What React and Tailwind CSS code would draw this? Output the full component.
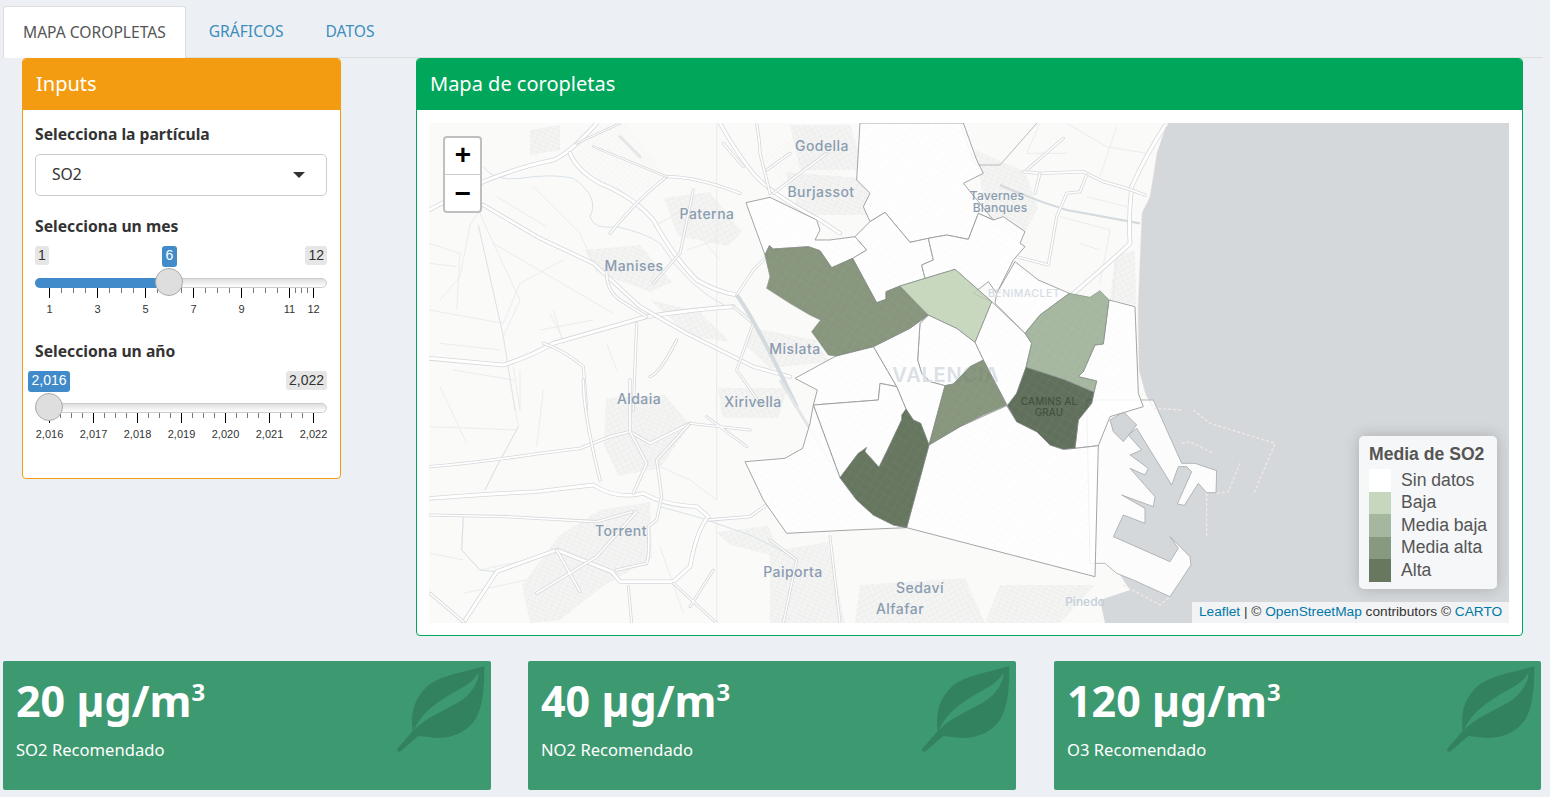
import React from "react";

const Road = ({ d, w = 2.6 }) => (
  <g fill="none" strokeLinecap="round" strokeLinejoin="round">
    <path d={d} stroke="#d6d8da" strokeWidth={w + 1.6} vectorEffect="non-scaling-stroke" />
    <path d={d} stroke="#ffffff" strokeWidth={w} vectorEffect="non-scaling-stroke" />
  </g>
);
const Thin = ({ d, c = "#e7e8e8", w = 0.8 }) => (
  <path d={d} fill="none" stroke={c} strokeWidth={w} vectorEffect="non-scaling-stroke" />
);
const Z = ({ x, y, children }) => <g transform={`translate(${x} ${y}) scale(0.33333)`}>{children}</g>;

const whites = [
  "390,-171 380,0 420,40 400,80 420,125 465,97 540,187 595,175 650,165 715,178 745,100 790,120 700,10 760,-20 740,-60 700,-171",
  "48,68 120,52 260,120 270,150 255,180 300,180 375,170 410,210 368,235 305,263 270,212 235,200 130,207 118,197 105,225",
  "375,170 420,125 465,97 540,187 595,175 610,240 575,255 585,295 510,318 468,335 468,358 440,368 368,235 410,210",
  "595,175 650,165 715,178 745,100 790,120 820,110 885,155 870,190 885,200 850,240 800,340 775,305 730,340 785,365 675,268 585,295 575,255 610,240",
  "855,245 925,300 1018,340 930,405 885,460 795,370 800,340",
  "785,365 885,460 905,490 888,562 860,640 832,677 760,540 735,487",
  "1137,360 1215,380 1225,640 1240,680 1140,710 1105,797 1035,805 1045,720 1085,670 1092,637 1100,603 1045,590 1060,575 1095,495 1120,492",
  "595,405 680,445 735,487 760,540 720,560 670,612 645,617 600,605 575,580 563,540 570,430",
  "430,500 540,445 595,405 570,430 563,540 575,580 600,605 645,617 597,795 572,730 550,720 528,687 500,620",
  "195,595 318,528 430,500 500,620 450,610 445,660 250,675 262,630",
  "250,675 445,660 450,610 500,620 528,687 515,720 470,815 447,862 405,815 385,820 330,893",
  "45,845 165,835 218,805 240,730 250,675 330,893 380,960 430,1005 490,1035 530,1043 365,1050 170,1060 100,960",
  "597,795 690,740 830,677 860,725 920,755 960,795 1000,808 1035,805 1105,797 1095,1190 530,1043",
];
const greens = [
  ["105,225 118,197 130,207 235,200 270,212 305,263 368,235 440,368 468,358 468,335 510,318 560,370 595,405 540,445 430,500 318,528 295,525 270,490 245,455 272,420 240,405 180,370 110,325 120,290", "#6a7d5e"],
  ["510,318 675,268 785,365 735,487 680,445 595,405 560,370", "#bacfaf"],
  ["1018,340 1080,352 1110,332 1137,360 1120,492 1095,495 1060,575 1045,590 1100,603 1092,637 1005,600 888,562 905,490 885,460 930,405", "#91a689"],
  ["888,562 1005,600 1092,637 1085,670 1045,720 1035,805 1000,808 960,795 920,755 860,725 832,677 860,640", "#3b4d34"],
  ["760,540 830,675 760,705 690,740 597,795 645,617 670,612 720,560", "#6a7d5e"],
  ["528,687 550,720 572,730 597,795 530,1043 490,1035 430,1005 380,960 330,893 385,820 410,802 405,815 447,862 470,815 515,720 515,705", "#415538"],
];

const labels = [
  ["Godella", 822, 151], ["Burjassot", 821, 197], ["Paterna", 707, 219], ["Manises", 634, 271],
  ["Mislata", 795, 354], ["Aldaia", 639, 404], ["Xirivella", 753, 407], ["Torrent", 621, 536],
  ["Paiporta", 793, 577], ["Sedaví", 920, 593], ["Alfafar", 900, 614],
];

function MapArt() {
  return (
    <svg viewBox="429 123 1080 500" className="block w-full h-full">
      <defs>
        <pattern id="u1" width="5" height="5" patternUnits="userSpaceOnUse" patternTransform="rotate(-28)">
          <rect width="5" height="5" fill="#f4f4f3" /><path d="M0 0H5M0 0V5" stroke="#e3e4e4" strokeWidth="0.7" />
        </pattern>
        <pattern id="u2" width="6" height="4" patternUnits="userSpaceOnUse" patternTransform="rotate(24)">
          <rect width="6" height="4" fill="#f4f4f3" /><path d="M0 0H6M0 0V4" stroke="#e3e4e4" strokeWidth="0.7" />
        </pattern>
        <pattern id="g" width="14" height="12" patternUnits="userSpaceOnUse" patternTransform="rotate(40)">
          <path d="M0 0H14M0 0V12" stroke="#e3e4e5" strokeWidth="0.9" />
        </pattern>
        <pattern id="s" width="24" height="24" patternUnits="userSpaceOnUse" patternTransform="rotate(32)">
          <path d="M0 0H24M0 0V24" stroke="#ffffff" strokeOpacity="0.13" strokeWidth="1.4" />
        </pattern>
        <pattern id="w" width="22" height="18" patternUnits="userSpaceOnUse" patternTransform="rotate(32)">
          <path d="M0 0H22M0 0V18" stroke="#f0f1f1" strokeWidth="1.2" />
        </pattern>
      </defs>
      <rect x="429" y="123" width="1080" height="500" fill="#d4d8db" />
      <polygon points="429,123 1167,123 1157,153 1150,197 1142,213 1138,310 1139,370 1146,395 1153,407 1145,425 1115,425 1110,445 1125,470 1115,505 1110,560 1130,590 1100,600 1105,623 429,623" fill="#fafaf9" />
      <g>
        <polygon points="790,125 850,125 865,170 800,170" fill="url(#u1)" />
        <polygon points="785,172 860,178 880,215 800,215" fill="url(#u2)" />
        <polygon points="664,198 710,192 742,232 728,246 678,236" fill="url(#u1)" />
        <polygon points="585,250 640,245 672,282 650,292 596,272" fill="url(#u2)" />
        <polygon points="650,300 700,312 730,342 690,336" fill="url(#u1)" />
        <polygon points="755,328 815,340 830,362 770,368 745,345" fill="url(#u2)" />
        <polygon points="606,398 665,395 690,425 660,468 618,476 604,445" fill="url(#u1)" />
        <polygon points="640,405 680,420 650,470" fill="url(#u2)" />
        <polygon points="718,388 788,388 778,418 722,418" fill="url(#u1)" />
        <polygon points="600,510 650,502 652,558 600,588 560,620 530,623 522,585 560,535" fill="url(#u2)" />
        <polygon points="716,532 768,526 782,558 730,545" fill="url(#u1)" />
        <polygon points="770,552 828,542 845,623 770,623" fill="url(#u2)" />
        <polygon points="860,585 965,578 985,623 855,623" fill="url(#u1)" />
        <polygon points="975,150 1025,172 1038,208 1020,242 988,225" fill="url(#u2)" />
        <polygon points="1115,255 1135,250 1136,305 1110,300" fill="url(#u1)" />
        <polygon points="1000,585 1095,585 1060,623 985,623" fill="url(#u2)" />
        <polygon points="530,130 560,125 560,150 530,155" fill="url(#u2)" />
      </g>
      <Z x={420} y={110}>
        <polygon points="480,60 620,40 740,200 640,260 540,215 470,150" fill="url(#g)" />
        <polygon points="1030,140 1160,40 1260,120 1260,300 1100,240" fill="url(#g)" />
        <Thin d="M190,285 L150,345 L120,500 L60,570 M220,400 L300,570 L250,680 M340,230 L480,370 L520,460 M230,260 L380,350 M400,600 L430,700 M560,700 L590,780 M100,780 L280,810 M27,600 L250,640 L300,520 L430,450 M27,400 L120,430 L110,600 M890,40 L890,900 M360,660 L520,630 M390,610 L430,690 M300,900 L280,770 M220,400 L580,610 M180,310 L220,400 M30,460 L110,470 M60,700 L240,720 M300,780 L300,900 M700,350 L790,300 M840,380 L900,450 M800,420 L890,390" />
        <Thin d="M190,170 Q220,215 300,205 Q400,190 460,205 Q540,260 510,320 Q520,360 590,350 Q680,370 720,400 Q800,530 920,590 M175,345 L250,680 L285,900" c="#d9e2e8" w={1} />
        <Road d="M27,300 L190,215 Q300,170 400,150 Q450,130 530,40" w={3} />
        <Road d="M450,130 Q470,180 540,220 Q640,260 700,330 Q760,440 830,510 Q890,545 950,555" w={3} />
        <Road d="M27,745 L250,765 Q330,740 400,700 L680,620 Q800,600 940,590" w={3} />
        <Road d="M190,285 L360,385 L520,460 L660,590 L800,670 L1000,770 L1110,800" w={2.6} />
        <Road d="M900,40 Q950,130 1000,190 Q1050,250 1200,330 L1260,370" w={2.6} />
        <Road d="M1010,40 Q1020,100 1020,130 L1050,250" w={1.6} />
        <Road d="M560,470 Q555,540 600,570 L680,620" w={1.8} />
        <Road d="M740,200 Q660,260 570,370" w={1.6} />
        <Road d="M740,200 Q830,200 960,250" w={1.8} />
        <Road d="M470,100 L600,40 M520,110 L740,200 M600,80 L660,140" w={1} />
        <Road d="M820,240 L780,430 L700,520 M940,590 L1000,640 L950,780 L1020,880" w={1.3} />
        <Road d="M500,900 L490,770 Q430,720 370,700 M640,900 L650,640 M770,690 Q720,790 690,800 M1040,180 L1110,130 M1060,250 L1220,130 M910,100 L970,170 M950,555 L1000,480 L1040,440" w={1.5} />
        <path d="M950,555 Q1000,620 1130,890" fill="none" stroke="#d4dade" strokeWidth="4" vectorEffect="non-scaling-stroke" />
      </Z>
      <Z x={430} y={380}>
        <Thin d="M0,140 L260,150 M30,20 L110,190 M240,0 L265,140 L200,260 L165,330 M0,520 L100,540 M100,410 L95,510 L150,570 L290,540 M690,260 L780,300 L860,360 L860,0 M860,420 L860,729 M340,30 L320,200 M690,500 L760,700 M100,640 L290,600" />
        <Thin d="M265,140 L200,260 L165,330 M100,410 L95,510 L150,570 L200,575 M690,380 L800,410 L960,465 L1070,520" c="#d9e2e8" w={1} />
        <Road d="M0,355 Q200,340 320,335 L490,315 Q560,360 640,340 Q700,375 800,380 L835,410 Q800,450 780,560 L730,605 L570,605 L545,575 L380,510 L200,575 L100,729" w={2.8} />
        <Road d="M0,260 Q130,250 330,220 L450,205 L540,170 L600,155 L660,190 L780,130" w={1.8} />
        <Road d="M460,0 Q460,100 510,300 M600,0 L600,155 L650,250 L610,340" w={1.7} />
        <Road d="M0,405 L230,410 L500,425 L605,395" w={1.5} />
        <Road d="M780,130 L680,240 Q690,310 695,350 L680,420 L655,440 Q660,520 650,550 L560,570" w={1.6} />
        <Road d="M835,420 L960,410 L1030,360 M320,640 L500,530 L620,395 M380,510 L450,635 M0,640 L100,725" w={1.7} />
        <Road d="M780,130 L960,150 M830,110 L950,200 M730,610 L860,729 M850,570 L780,680 M595,620 L605,729 M1020,480 L1100,540 L1060,729 M1200,470 L1230,729" w={1.3} />
        <path d="M1050,0 L1200,245 L1260,340" fill="none" stroke="#e3e6e8" strokeWidth="3" vectorEffect="non-scaling-stroke" />
      </Z>
      <Z x={1000} y={110}>
        <path d="M0,225 Q100,270 200,300 L420,340" fill="none" stroke="#d4dade" strokeWidth="2.2" vectorEffect="non-scaling-stroke" />
        <Thin d="M120,40 L80,130 L200,130 M350,50 L300,200 M180,320 L330,360 L300,520 M350,450 L335,600 M200,40 L320,110 L440,130 M260,260 L380,290 M240,400 L300,420" />
        <Road d="M500,40 Q440,130 395,230 Q385,320 390,400 Q360,430 210,560" w={3} />
        <Road d="M70,185 L120,190 L250,185 L310,215 L380,235 L435,255" w={1.7} />
        <Road d="M190,85 L80,180 M120,190 L105,250 M260,195 L240,245 L200,250 L170,320 L145,465 L50,440" w={1.5} />
      </Z>
      <path d="M960,123 L975,165 L1000,165 L1037,123" fill="none" stroke="#a9adad" strokeWidth="0.8" />
      <Z x={1090} y={400}>
        <g fill="#fdfcfc" stroke="#a3a8aa" strokeWidth="0.8">
          <path vectorEffect="non-scaling-stroke" d="M150,0 L190,0 L275,190 L297,190 L315,190 L380,212 L378,278 L350,278 L325,250 L283,316 L262,312 L305,215 L290,200 L265,200 L245,255 L140,85 L115,105 L155,150 L120,165 L175,205 L165,225 L120,205 L195,290 L190,320 L95,285 L165,325 L165,370 L100,345 L70,410 L240,485 L265,445 L240,410 L300,470 L303,495 L240,590 L130,540 L80,520 L45,490 L0,490 L-10,0 Z" />
          <path vectorEffect="non-scaling-stroke" d="M60,60 L100,35 L140,75 L100,125 L70,95 Z" fill="#d3d6d8" />
        </g>
        <path d="M190,25 L275,30 M310,30 L360,70 L555,130 L490,285 M380,280 L415,275 L450,190 M350,280 L350,410 M275,130 L300,125 L370,160 M100,555 L210,615 L240,590" fill="none" stroke="#f3e6e6" strokeWidth="1.4" strokeDasharray="3 2" vectorEffect="non-scaling-stroke" />
      </Z>
      <path d="M1167,123 L1157,153 L1150,197 L1142,213 L1138,310 L1139,370 L1146,395 L1153,407" fill="none" stroke="#efdcdc" strokeWidth="1" strokeDasharray="2 2" />
      <text x="1085" y="606" textAnchor="middle" fontFamily="Inter" fontWeight="500" fontSize="12" fill="#c5ced8">Pinedo</text>
      <Z x={730} y={180}>
        <g stroke="#979b9b" strokeWidth="0.9" strokeLinejoin="round">
          {whites.map((p, i) => (
            <polygon key={i} points={p} fill="#ffffff" fillOpacity="0.82" vectorEffect="non-scaling-stroke" />
          ))}
        </g>
        {whites.map((p, i) => <polygon key={i} points={p} fill="url(#w)" opacity="0.7" />)}
      </Z>
      <text x="946" y="382" textAnchor="middle" fontFamily="Inter" fontWeight="600" fontSize="20" letterSpacing="0.8" fill="#dbe0e7">VALENCIA</text>
      <Z x={730} y={180}>
        <g stroke="#8c9190" strokeWidth="0.9" strokeOpacity="0.8" strokeLinejoin="round">
          {greens.map(([p, c], i) => (
            <polygon key={i} points={p} fill={c} fillOpacity="0.8" vectorEffect="non-scaling-stroke" />
          ))}
        </g>
        {greens.map(([p], i) => <polygon key={i} points={p} fill="url(#s)" />)}
      </Z>
      <g fontFamily="Inter" fontWeight="500" fontSize="14" letterSpacing="0.45" fill="#8a9cb0" textAnchor="middle">
        {labels.map(([t, x, y]) => <text key={t} x={x} y={y}>{t}</text>)}
        <text x="997" y="200" fontSize="12" letterSpacing="0.2">Tavernes</text>
        <text x="1000" y="212" fontSize="12" letterSpacing="0.2">Blanques</text>
        <text x="1024" y="297" fontSize="10.5" fill="#d6dce4">BENIMACLET</text>
        <text x="1049" y="405" fontSize="10" letterSpacing="0.1" fill="#43503f">CAMINS AL</text>
        <text x="1049" y="416" fontSize="10" letterSpacing="0.1" fill="#43503f">GRAU</text>
      </g>
    </svg>
  );
}

function Slider({ from, to, value, blueLeft, blueW, handle, fill, majors, minors }) {
  return (
    <div className="relative h-[103px] w-[292px] font-['Liberation_Sans',sans-serif]">
      {from && <span className="absolute top-2 left-0 h-[19px] px-[3px] rounded-[3px] bg-[#e6e6e6] text-[14px] leading-[19px] text-[#333] text-center">{from}</span>}
      <span className="absolute top-2 h-[21px] rounded-[3px] bg-[#428bca] text-[14px] leading-[19px] text-white text-center px-[3px]" style={{ left: blueLeft, width: blueW }}>{value}</span>
      <span className="absolute top-2 right-0 h-[19px] px-[3px] rounded-[3px] bg-[#e6e6e6] text-[14px] leading-[19px] text-[#333]">{to}</span>
      <div className="absolute top-10 left-0 right-0 h-[10px] rounded-[5px] border border-[#cccccc] bg-gradient-to-b from-[#dedede] to-white" />
      {fill > 0 && <div className="absolute top-10 left-0 h-[10px] rounded-l-[5px] bg-[#428bca]" style={{ width: fill }} />}
      {minors.map((x) => <i key={x} className="absolute top-[50px] h-[5px] w-px bg-[#777]" style={{ left: x }} />)}
      {majors.map(([x, t]) => (
        <React.Fragment key={t}>
          <i className="absolute top-[50px] h-[10px] w-px bg-black" style={{ left: x }} />
          <span className="absolute top-[65px] w-10 -ml-5 text-center text-[11px] leading-[13px] text-[#333]" style={{ left: x + 0.5 }}>{t}</span>
        </React.Fragment>
      ))}
      <div className="absolute top-[30px] size-[28px] rounded-full border border-[#ababab] bg-[#dedede]" style={{ left: handle }} />
    </div>
  );
}

const Leaf = () => (
  <svg viewBox="0 0 315 300" className="absolute right-[-4px] top-[-1px] w-[105px] h-[100px]" fill="#000" fillOpacity="0.15">
    <path fillRule="evenodd" d="M22,266 L68,213 C62,160 70,120 110,80 C150,45 230,35 283,18 C283,80 280,140 255,180 C225,225 165,240 120,232 L85,228 L32,274 C24,278 19,272 22,266 Z M72,210 C90,170 120,140 170,110 C210,85 250,70 265,38 C268,60 245,105 200,130 C150,158 105,175 72,210 Z" />
  </svg>
);

const ValueBox = ({ v, t, cls }) => (
  <div className={`relative h-[129px] bg-[#3d9970] rounded-[2px] overflow-hidden text-white pl-[13px] pt-[15px] ${cls}`}>
    <div className="h-[50px] text-[43px] leading-[50px] font-bold whitespace-nowrap">{v} µg/m<sup className="text-[24px] top-[-16px]">3</sup></div>
    <div className="mt-[13px] text-[16.6px] leading-[22px]">{t}</div>
    <Leaf />
  </div>
);

const monthMaj = [[14, "1"], [62, "3"], [110, "5"], [158, "7"], [206, "9"], [254, "11"], [278, "12"]];
const monthMin = [26, 38, 50, 74, 86, 98, 122, 134, 146, 170, 182, 194, 218, 230, 242, 260, 266, 272];
const yearMaj = [[14, "2,016"], [58, "2,017"], [102, "2,018"], [146, "2,019"], [190, "2,020"], [234, "2,021"], [278, "2,022"]];
const yearMin = [25, 36, 47, 69, 80, 91, 113, 124, 135, 157, 168, 179, 201, 212, 223, 245, 256, 267];

export default function App() {
  return (
    <div className="w-[1550px] h-[797px] overflow-hidden bg-[#ecf0f5] font-['Noto_Sans',sans-serif] text-[#333] pt-[6px]">
      <nav className="ml-[3px] w-[1540px] h-[52px] flex gap-[2px] border-b border-[#dddddd] text-[15.6px]">
        <div className="h-[52px] px-[19px] bg-white border border-[#dddddd] border-b-0 rounded-t-[4px] text-[#555] leading-[50px]">MAPA COROPLETAS</div>
        <div className="px-5 ml-px text-[#3c8dbc] leading-[50px]">GRÁFICOS</div>
        <div className="px-5 text-[#3c8dbc] leading-[50px]">DATOS</div>
      </nav>
      <div className="flex h-[578px] pl-[22px] gap-[75px]">
        <section className="w-[319px] h-[421px] bg-white border border-[#f39c12] rounded-[4px] overflow-hidden">
          <header className="h-[52px] -mt-px bg-[#f39c12] text-white text-[20px] leading-[52px] pl-[13px]">Inputs</header>
          <div className="pl-[12px] pt-[14px]">
            <div className="font-bold text-[15.7px] leading-[20px]">Selecciona la partícula</div>
            <div className="mt-[10px] w-[292px] h-[42px] border border-[#cccccc] rounded-[5px] flex items-center justify-between pl-4 pr-[21px] text-[15.7px]">
              <span className="-mt-px">SO2</span>
              <span className="w-0 h-0 border-x-[6px] border-x-transparent border-t-[6px] border-t-[#333]" />
            </div>
            <div className="mt-5 font-bold text-[15.7px] leading-[20px] mb-[2px]">Selecciona un mes</div>
            <Slider from="1" to="12" value="6" blueLeft={127} blueW={15} handle={120} fill={130} majors={monthMaj} minors={monthMin} />
            <div className="font-bold text-[15.7px] leading-[20px] mb-[2px]">Selecciona un año</div>
            <Slider to="2,022" value="2,016" blueLeft={-7} blueW={42} handle={0} fill={0} majors={yearMaj} minors={yearMin} />
          </div>
        </section>
        <section className="w-[1107px] h-[578px] bg-white border border-[#00a65a] rounded-[4px] overflow-hidden">
          <header className="h-[52px] -mt-px bg-[#00a65a] text-white text-[20px] leading-[52px] pl-[13px]">Mapa de coropletas</header>
          <div className="relative mt-[13px] ml-3 w-[1080px] h-[500px] overflow-hidden">
            <MapArt />
            <div className="absolute left-[14px] top-[13px] w-[39px] h-[77px] bg-white border-2 border-[#bfbfbf] rounded-[4px] flex flex-col text-black font-['Liberation_Mono',monospace] font-bold text-[28px]">
              <div className="h-[37px] pl-px pt-[2px] flex items-center justify-center border-b border-[#cccccc]">+</div>
              <div className="flex-1 pl-px flex items-center justify-center">−</div>
            </div>
            <div className="absolute left-[930px] top-[313px] w-[138px] h-[153px] bg-white/80 rounded-[5px] shadow-[0_0_15px_rgba(0,0,0,0.2)] pl-[10px] pt-[8px] font-['Liberation_Sans',sans-serif] text-[17.6px] text-[#555]">
              <div className="font-bold leading-[21px] mb-[4px]">Media de SO2</div>
              {[["Sin datos", "bg-white"], ["Baja", "bg-[#c7d7bd]"], ["Media baja", "bg-[#a6b7a0]"], ["Media alta", "bg-[#87997f]"], ["Alta", "bg-[#67785f]"]].map(([t, c]) => (
                <div key={t} className="flex h-[22.6px] items-center leading-none">
                  <span className={`w-[22px] h-full ${c}`} />
                  <span className="ml-[10px]">{t}</span>
                </div>
              ))}
            </div>
            <div className="absolute right-0 bottom-0 h-[21px] w-[317px] pl-[7px] bg-white/70 font-['Liberation_Sans',sans-serif] text-[13.7px] leading-[19px] text-[#333] whitespace-nowrap">
              <span className="text-[#0078a8]">Leaflet</span> | © <span className="text-[#0078a8]">OpenStreetMap</span> contributors © <span className="text-[#0078a8]">CARTO</span>
            </div>
          </div>
        </section>
      </div>
      <div className="mt-[25px] ml-[3px] flex">
        <ValueBox v="20" t="SO2 Recomendado" cls="w-[488px]" />
        <ValueBox v="40" t="NO2 Recomendado" cls="w-[488px] ml-[37px]" />
        <ValueBox v="120" t="O3 Recomendado" cls="w-[487px] ml-[38px]" />
      </div>
    </div>
  );
}
